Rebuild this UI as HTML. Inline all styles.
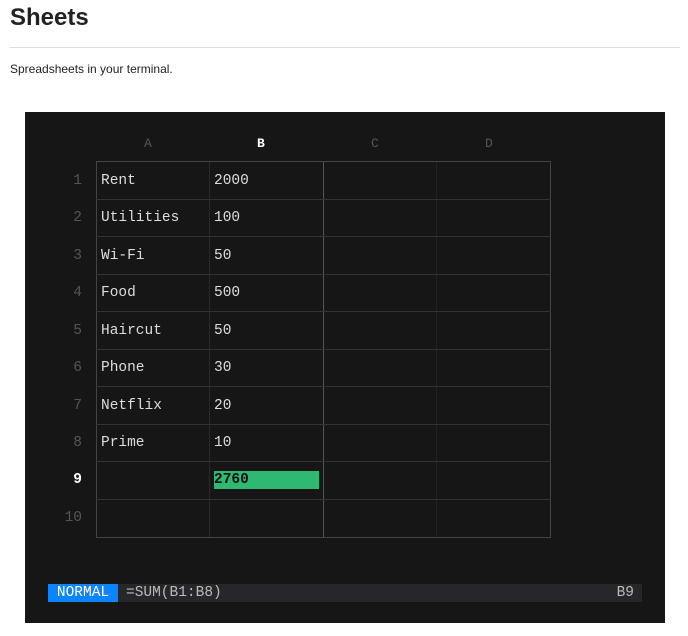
<!DOCTYPE html>
<html><head><style>
body{margin:0;background:#fff;font-family:"Liberation Sans",sans-serif;width:688px;height:636px;overflow:hidden;position:relative}
h1{position:absolute;left:10px;top:4px;margin:0;font-size:24px;font-weight:bold;color:#222}
.hr{position:absolute;left:10px;top:47px;width:670px;height:1px;background:#ddd}
p{position:absolute;left:10px;top:62px;margin:0;font-size:12px;color:#222}
.term{position:absolute;left:25px;top:112px;width:640px;height:511px;background:#161616;font-family:"Liberation Mono",monospace;font-size:14.5px;color:#ddd}
.a{position:absolute}
.vl{position:absolute;width:1px;background:#333;top:49px;height:376px}
.hl{position:absolute;height:1px;background:#333;left:71px;width:455px}
.ch{position:absolute;top:24px;color:#555;font-size:13px}
.rn{position:absolute;color:#555;width:30px;text-align:right;left:27px}
</style></head><body>
<h1>Sheets</h1><div class="hr"></div>
<p>Spreadsheets in your terminal.</p>
<div class="term">
<div class="ch" style="left:119px">A</div>
<div class="ch" style="left:232px;color:#fff;font-weight:bold">B</div>
<div class="ch" style="left:346px">C</div>
<div class="ch" style="left:460px">D</div>
<div class="vl" style="left:71px;background:#444"></div>
<div class="vl" style="left:184px;background:#2a2a2a"></div>
<div class="vl" style="left:298px;background:#555"></div>
<div class="vl" style="left:411px;background:#222"></div>
<div class="vl" style="left:525px;background:#444"></div>
<div class="hl" style="top:49px;background:#444"></div>
<div class="hl" style="top:87px"></div>
<div class="hl" style="top:124px"></div>
<div class="hl" style="top:162px"></div>
<div class="hl" style="top:199px"></div>
<div class="hl" style="top:237px"></div>
<div class="hl" style="top:274px"></div>
<div class="hl" style="top:312px"></div>
<div class="hl" style="top:349px"></div>
<div class="hl" style="top:387px"></div>
<div class="hl" style="top:425px;background:#444"></div>
<div class="rn" style="top:61px">1</div><div class="a" style="left:76px;top:61px">Rent</div><div class="a" style="left:189px;top:61px">2000</div>
<div class="rn" style="top:98px">2</div><div class="a" style="left:76px;top:98px">Utilities</div><div class="a" style="left:189px;top:98px">100</div>
<div class="rn" style="top:136px">3</div><div class="a" style="left:76px;top:136px">Wi-Fi</div><div class="a" style="left:189px;top:136px">50</div>
<div class="rn" style="top:173px">4</div><div class="a" style="left:76px;top:173px">Food</div><div class="a" style="left:189px;top:173px">500</div>
<div class="rn" style="top:211px">5</div><div class="a" style="left:76px;top:211px">Haircut</div><div class="a" style="left:189px;top:211px">50</div>
<div class="rn" style="top:248px">6</div><div class="a" style="left:76px;top:248px">Phone</div><div class="a" style="left:189px;top:248px">30</div>
<div class="rn" style="top:286px">7</div><div class="a" style="left:76px;top:286px">Netflix</div><div class="a" style="left:189px;top:286px">20</div>
<div class="rn" style="top:323px">8</div><div class="a" style="left:76px;top:323px">Prime</div><div class="a" style="left:189px;top:323px">10</div>
<div class="rn" style="top:360px;color:#fff;font-weight:bold">9</div>
<div class="a" style="left:189px;top:359px;width:105px;height:18px;background:#2eb872;color:#111;font-weight:bold;line-height:18px">2760</div>
<div class="rn" style="top:398px">10</div>
<div class="a" style="left:23px;top:472px;width:594px;height:18px;background:#26272b;line-height:18px">
<span style="display:inline-block;background:#0a84ff;color:#fff;width:70px;text-align:center">NORMAL</span><span style="color:#bbb;margin-left:8px">=SUM(B1:B8)</span><span style="position:absolute;right:8px;color:#bbb">B9</span></div>
</div>
</body></html>
